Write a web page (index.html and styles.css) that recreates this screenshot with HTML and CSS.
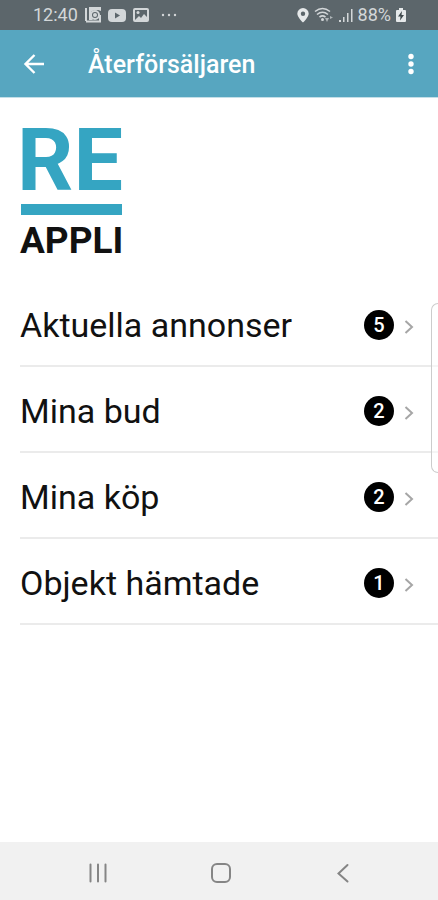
FILE: index.html
```html
<!DOCTYPE html>
<html lang="sv">
<head>
<meta charset="utf-8">
<meta name="viewport" content="width=device-width, initial-scale=1">
<title>Återförsäljaren</title>
<link rel="stylesheet" href="styles.css">
</head>
<body>
<div class="status">
  <div class="status-left">
    <span>12:40</span>
    <svg width="16" height="16" viewBox="0 0 16 16"><path d="M1 1v13M1 14.500h14V8" fill="none" stroke="#d3d7d9" stroke-width="2"/><path d="M4 0h12v4l-3-1H9L6 5v5l2 3H4z" fill="#d3d7d9"/><circle cx="10" cy="8" r="4" fill="#5c666b" stroke="#d3d7d9" stroke-width="2"/><circle cx="10" cy="8" r="2" fill="#d3d7d9"/></svg>
    <svg width="18" height="14" viewBox="0 0 18 14"><rect width="18" height="13" y="1" rx="4" fill="#d3d7d9"/><path d="M7 4.500v6l5-3z" fill="#5c666b"/></svg>
    <svg width="16" height="16" viewBox="0 0 16 16"><path fill="#d3d7d9" fill-rule="evenodd" d="M2 1h12q2 0 2 2v10q0 2-2 2H2q-2 0-2-2V3q0-2 2-2zM2 3v10l4-4 2 2 3-4 3 3V3z"/><circle cx="5" cy="5.500" r="1.500" fill="#d3d7d9"/></svg>
    <svg class="more-dots" width="16" height="4" viewBox="0 0 16 4" fill="#d3d7d9"><circle cx="2" cy="2" r="1.200"/><circle cx="8" cy="2" r="1.200"/><circle cx="14" cy="2" r="1.200"/></svg>
  </div>
  <div class="status-right">
    <svg width="12" height="16" viewBox="0 0 12 16"><path fill="#e6e9ea" fill-rule="evenodd" d="M6 1a5.700 5.700 0 0 1 5.700 5.700C11.700 10 6 15.500 6 15.500S.3 10 .3 6.700A5.700 5.700 0 0 1 6 1zM6 4.500a2.200 2.200 0 1 0 0 4.400 2.200 2.200 0 0 0 0-4.400z"/></svg>
    <svg width="20" height="16" viewBox="0 0 20 16"><g fill="none" stroke="#d3d7d9" stroke-width="1.600"><path d="M1 4.500q7.500-6 15 0M3 7.500q5.500-4.500 11 0M5.500 10.200q3-2.500 6 0"/></g><circle cx="8.500" cy="12.500" r="1.500" fill="#d3d7d9"/><path d="M11 11h4l-2 4zM16 9l3 1.500-3 1.500z" fill="#aeb5b8"/></svg>
    <svg width="14" height="16" viewBox="0 0 14 16" fill="#d3d7d9"><path d="M0 13h2v2H0zM4 10h1.500v5H4zM8 6h1.500v9H8zM12 2h1.500v13H12z"/></svg>
    <span>88%</span>
    <svg width="10" height="16" viewBox="0 0 10 16"><path d="M3 1h4v2h2q1 0 1 1v10q0 1-1 1H1q-1 0-1-1V4q0-1 1-1h2z" fill="#e6e9ea"/><path d="M6 4L2 9.500h2.500L4 13.500 8 8H5.500z" fill="#3f484c"/></svg>
  </div>
</div>
<header class="appbar">
  <button class="icon-btn" type="button" aria-label="Tillbaka"><svg width="24" height="24" viewBox="0 0 24 24" fill="none" stroke="#fff" stroke-width="2.400"><path d="M22 12H4M12.500 3L3.500 12l9 9"/></svg></button>
  <h1>Återförsäljaren</h1>
  <button class="icon-btn menu-btn" type="button" aria-label="Meny"><svg width="6" height="22" viewBox="0 0 6 22" fill="#fff"><circle cx="3" cy="3.500" r="2.700"/><circle cx="3" cy="11" r="2.700"/><circle cx="3" cy="18.500" r="2.700"/></svg></button>
</header>
<main>
  <div class="logo">
    <div class="logo-top">RE</div>
    <div class="logo-bottom">APPLI</div>
  </div>
  <ul class="list">
    <li><a href="#annonser"><span class="label">Aktuella annonser</span><span class="badge">5</span><svg class="chevron" width="10" height="20" viewBox="0 0 10 20"><path d="M1.500 6L8 12l-6.500 6"/></svg></a></li>
    <li><a href="#bud"><span class="label">Mina bud</span><span class="badge">2</span><svg class="chevron" width="10" height="20" viewBox="0 0 10 20"><path d="M1.500 6L8 12l-6.500 6"/></svg></a></li>
    <li><a href="#kop"><span class="label">Mina köp</span><span class="badge">2</span><svg class="chevron" width="10" height="20" viewBox="0 0 10 20"><path d="M1.500 6L8 12l-6.500 6"/></svg></a></li>
    <li><a href="#hamtade"><span class="label">Objekt hämtade</span><span class="badge">1</span><svg class="chevron" width="10" height="20" viewBox="0 0 10 20"><path d="M1.500 6L8 12l-6.500 6"/></svg></a></li>
  </ul>
  <div class="edge-handle"></div>
</main>
<nav class="navbar">
  <button class="icon-btn" type="button" aria-label="Senaste"><svg width="20" height="20" viewBox="0 0 20 20" fill="none" stroke="#858585" stroke-width="2" stroke-linecap="round"><path d="M2.500 1.500v17M10 1.500v17M17.500 1.500v17"/></svg></button>
  <button class="icon-btn" type="button" aria-label="Hem"><svg width="20" height="20" viewBox="0 0 20 20" fill="none" stroke="#858585" stroke-width="2"><rect x="1" y="1" width="18" height="18" rx="5"/></svg></button>
  <button class="icon-btn" type="button" aria-label="Bakåt"><svg width="20" height="20" viewBox="0 0 20 20" fill="none" stroke="#858585" stroke-width="2" stroke-linecap="round"><path d="M14.500 2L5.500 10.500l9 8"/></svg></button>
</nav>
</body>
</html>
```
FILE: styles.css
```css
* {
  box-sizing: border-box;
}

body {
  margin: 0;
  min-height: 100vh;
  display: flex;
  flex-direction: column;
  background: #fff;
  color: #111;
  font-family: Roboto, "Liberation Sans", sans-serif;
}

svg {
  display: block;
  flex: none;
}

.status {
  display: flex;
  justify-content: space-between;
  height: 30px;
  padding: 0 32px 0 33px;
  background: #5c666b;
  color: #d3d7d9;
  font-size: 18px;
  line-height: 30px;
}

.status-left,
.status-right {
  display: flex;
  align-items: center;
  gap: 7px;
}

.more-dots {
  margin-left: 5px;
}

.status-right {
  gap: 5px;
}

.appbar {
  display: flex;
  align-items: center;
  height: 68px;
  padding: 0 22px;
  background: #57a6c0;
  border-bottom: 1px solid #c4dfe8;
  color: #fff;
}

.icon-btn {
  display: flex;
  align-items: center;
  justify-content: center;
  padding: 0;
  border: 0;
  background: none;
}

h1 {
  flex: 1;
  margin: 0 0 0 42px;
  padding-top: 2px;
  font-size: 25px;
  font-weight: 500;
  line-height: 32px;
}

.menu-btn {
  width: 10px;
}

main {
  position: relative;
  flex: 1;
}

.logo {
  width: 102px;
  margin: 29px 0 14px 20px;
  font-weight: 700;
  white-space: nowrap;
}

.logo-top {
  height: 88px;
  border-bottom: 11px solid #35a5c2;
  margin-left: 1px;
  color: #35a5c2;
  font-size: 88px;
  line-height: 66px;
  text-indent: -4px;
}

.logo-bottom {
  color: #111;
  font-size: 37px;
  line-height: 52px;
}

.list {
  margin: 0;
  padding: 0 0 0 20px;
  list-style: none;
}

.list a {
  display: flex;
  align-items: center;
  height: 86px;
  padding: 4px 24px 0 0;
  border-bottom: 2px solid #ebebeb;
  color: #111;
  text-decoration: none;
}

.label {
  flex: 1;
  font-size: 34px;
  line-height: 40px;
}

.badge {
  width: 30px;
  height: 30px;
  margin-right: 10px;
  border-radius: 50%;
  background: #000;
  color: #fff;
  font-size: 20px;
  font-weight: 500;
  line-height: 30px;
  text-align: center;
}

.chevron {
  fill: none;
  stroke: #a6a6a6;
  stroke-width: 2;
}

.edge-handle {
  position: absolute;
  top: 205px;
  right: 0;
  width: 7px;
  height: 170px;
  border: 1px solid #ccc;
  border-right: 0;
  border-radius: 7px 0 0 7px;
  background: rgba(255, 255, 255, 0.5);
}

.navbar {
  display: flex;
  align-items: center;
  justify-content: space-between;
  height: 58px;
  padding: 4px 85px 0 88px;
  background: #f1f1f1;
}
```
